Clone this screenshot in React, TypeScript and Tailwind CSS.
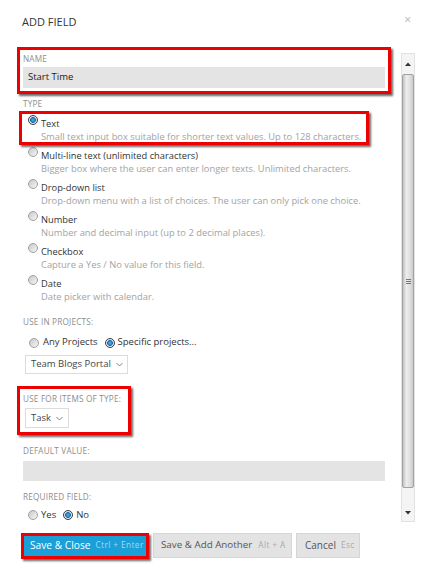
import React from "react";

const Radio = ({ checked = false }: { checked?: boolean }) =>
  checked ? (
    <span className="block w-[10px] h-[10px] shrink-0 rounded-full border border-[#3c3c3c] bg-[radial-gradient(circle,#56b4ec_0%,#1a6fb4_45%,#e6ecf2_58%,#c9d0d6_100%)]" />
  ) : (
    <span className="block w-[10px] h-[10px] shrink-0 rounded-full border border-[#a0a0a0] bg-[linear-gradient(135deg,#c8c8c8,#f7f7f7)]" />
  );

const Chevron = () => (
  <svg width="7" height="5" viewBox="0 0 7 5" className="ml-[5px]">
    <polyline points="0.5,1 3.5,4 6.5,1" fill="none" stroke="#777" strokeWidth="0.9" />
  </svg>
);

const Label = ({ children, className = "" }: { children: React.ReactNode; className?: string }) => (
  <div className={"text-[8.2px] leading-[10px] tracking-[0.2px] uppercase text-[#8d8d8d] " + className}>{children}</div>
);

const options = [
  ["Text", "Small text input box suitable for shorter text values. Up to 128 characters."],
  ["Multi-line text (unlimited characters)", "Bigger box where the user can enter longer texts. Unlimited characters."],
  ["Drop-down list", "Drop-down menu with a list of choices. The user can only pick one choice."],
  ["Number", "Number and decimal input (up to 2 decimal places)."],
  ["Checkbox", "Capture a Yes / No value for this field."],
  ["Date", "Date picker with calendar."],
];

const RedBox = ({ className }: { className: string }) => (
  <div className={"absolute border-[3px] border-[#ec0000] shadow-[2px_2px_2px_rgba(0,0,0,0.6)] pointer-events-none " + className} />
);

export default function App() {
  return (
    <div className="relative w-[426px] h-[578px] bg-white overflow-hidden font-['Open_Sans',sans-serif] text-[#333]">
      {/* Header */}
      <div className="h-[47px] flex items-start justify-between pl-[22px] pr-[15px] pt-[15px]">
        <div className="text-[11px] leading-[14px] text-[#333]">ADD FIELD</div>
        <div className="text-[12px] leading-[10px] text-[#b5b5b5] mt-[0px]">×</div>
      </div>

      {/* Main */}
      <div className="flex pl-[23px]">
        <div className="w-[362px] flex flex-col">
          <Label className="pt-[7px] h-[20px]">Name</Label>
          <div className="h-[21px] bg-[#e4e4e4] flex items-center pl-[5px] text-[9.5px] text-[#1a1a1a]">Start Time</div>
          <Label className="pt-[11px] h-[23px]">Type</Label>
          {options.map(([title, desc], i) => (
            <div key={title} className="h-[32px] flex pl-[5px] pt-[6px]">
              <div className="w-[13px]">
                <div className="mt-[-2px]">
                  <Radio checked={i === 0} />
                </div>
              </div>
              <div className="flex flex-col">
                <div className="text-[9.3px] leading-[13px] text-[#333] whitespace-nowrap">{title}</div>
                <div className="mt-[1px] text-[9.35px] leading-[12px] text-[#a3a3a3] whitespace-nowrap">{desc}</div>
              </div>
            </div>
          ))}
          <Label className="pt-[14px] h-[27px]">Use in projects:</Label>
          <div className="h-[25px] flex items-center pl-[6px] text-[9.5px] text-[#333]">
            <Radio />
            <span className="ml-[4px]">Any Projects</span>
            <span className="ml-[7px]">
              <Radio checked />
            </span>
            <span className="ml-[3px]">Specific projects...</span>
          </div>
          <div className="ml-[2px] w-[103px] h-[19px] border border-[#dcdcdc] flex items-center pl-[5px] text-[9.5px] text-[#444]">
            Team Blogs Portal
            <Chevron />
          </div>
          <Label className="pt-[20px] h-[30px]">Use for items of type:</Label>
          <div className="mt-[4px] ml-[2px] w-[44px] h-[20px] border border-[#dcdcdc] flex items-center pl-[5px] text-[9.5px] text-[#444]">
            Task
            <Chevron />
          </div>
          <Label className="pt-[18px] h-[28px]">Default value:</Label>
          <div className="mt-[5px] h-[20px] bg-[#e4e4e4]" />
          <Label className="mt-[11px]">Required field:</Label>
          <div className="mt-[4px] h-[18px] flex items-center pl-[5px] text-[9.5px] text-[#333]">
            <Radio />
            <span className="ml-[3px]">Yes</span>
            <span className="ml-[7px]">
              <Radio checked />
            </span>
            <span className="ml-[3px]">No</span>
          </div>
        </div>

        {/* Scrollbar */}
        <div className="ml-[16px] mt-[6px] w-[14px] h-[469px] border border-[#e2e2e2] bg-[#f4f4f4] flex flex-col">
          <div className="h-[20px] flex items-center justify-center">
            <svg width="6" height="4" viewBox="0 0 6 4">
              <polygon points="0,4 3,0.5 6,4" fill="#333" />
            </svg>
          </div>
          <div className="h-[414px] rounded-[2px] border border-[#a3a3a3] bg-[linear-gradient(to_right,#c2c2c2,#ededed_35%,#dadada_80%,#c8c8c8)] flex items-center justify-center">
            <div className="flex flex-col gap-[1px]">
              <div className="w-[5px] h-[1px] bg-[#777]" />
              <div className="w-[5px] h-[1px] bg-[#777]" />
              <div className="w-[5px] h-[1px] bg-[#777]" />
            </div>
          </div>
          <div className="flex-1 flex items-end justify-center pb-[6px]">
            <svg width="6" height="4" viewBox="0 0 6 4">
              <polygon points="0,0 6,0 3,3.5" fill="#333" />
            </svg>
          </div>
        </div>
      </div>

      {/* Buttons */}
      <div className="flex items-start mt-[9px] pl-[22px]">
        <div className="w-[126px] h-[25px] bg-[#1a9fd8] flex items-center pl-[8px] whitespace-nowrap">
          <span className="text-[10.2px] text-white">Save &amp; Close</span>
          <span className="ml-[5px] text-[8.3px] tracking-[0.4px] text-[#a6daf0]">Ctrl + Enter</span>
        </div>
        <div className="ml-[5px] w-[139px] h-[25px] bg-[#e3e3e3] border border-[#d6d6d6] flex items-center pl-[7px] whitespace-nowrap">
          <span className="text-[9.8px] text-[#555]">Save &amp; Add Another</span>
          <span className="ml-[6px] text-[8.3px] tracking-[0.4px] text-[#aaa]">Alt + A</span>
        </div>
        <div className="ml-[4px] w-[64px] h-[25px] bg-[#e3e3e3] border border-[#d6d6d6] flex items-center pl-[8px] whitespace-nowrap">
          <span className="text-[10px] text-[#555]">Cancel</span>
          <span className="ml-[5px] text-[8.3px] tracking-[0.4px] text-[#aaa]">Esc</span>
        </div>
      </div>

      {/* Annotation overlays */}
      <RedBox className="left-[17px] top-[47px] w-[374px] h-[47px]" />
      <RedBox className="left-[19px] top-[111px] w-[350px] h-[34px]" />
      <RedBox className="left-[17px] top-[386px] w-[114px] h-[49px]" />
      <RedBox className="left-[21px] top-[533px] w-[128px] h-[26px]" />
    </div>
  );
}
